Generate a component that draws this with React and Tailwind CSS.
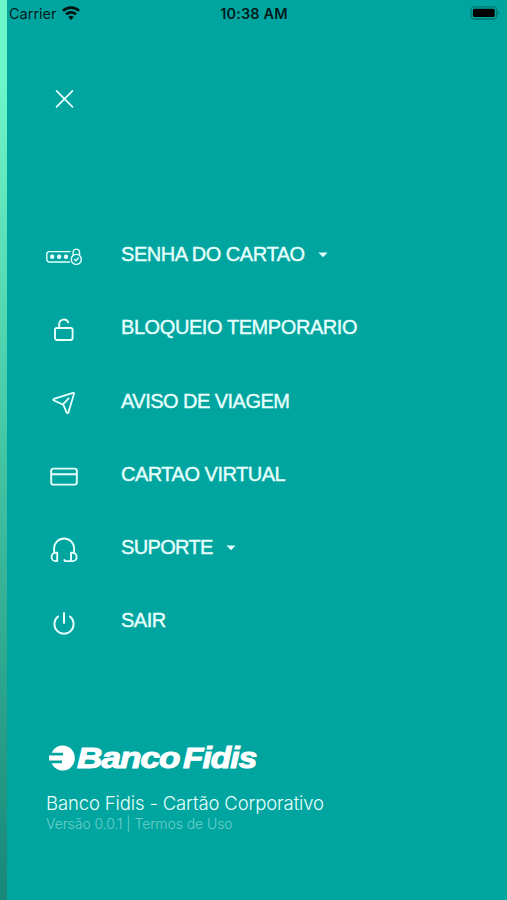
// src/pages/Menu.jsx
import { clsx } from "clsx";

function Icon({ className, children, ...props }) {
  return (
    <svg
      className={clsx("shrink-0 overflow-visible", className)}
      fill="none"
      stroke="currentColor"
      strokeLinecap="round"
      strokeLinejoin="round"
      strokeWidth="1.9"
      {...props}
    >
      {children}
    </svg>
  );
}

function PasswordIcon() {
  return (
    <Icon viewBox="0 0 36 18" className="h-[18px] w-9" strokeWidth="1.4">
      <path d="M24 3.6H3.4A2.6 2.6 0 0 0 .8 6.2v5.2A2.6 2.6 0 0 0 3.4 14H23.5" />
      <path d="M27.1 6.8V4.3a3.2 3.2 0 0 1 6.4 0v2.5" />
      <circle cx="30.3" cy="11.4" r="5" />
      <path d="m28.4 11.4 1.4 1.4 2.5-2.7" />
      <g fill="currentColor" stroke="none">
        <circle cx="6.2" cy="8.8" r="2.2" />
        <circle cx="13.1" cy="8.8" r="2.2" />
        <circle cx="20" cy="8.8" r="2.2" />
      </g>
    </Icon>
  );
}

function UnlockIcon() {
  return (
    <Icon viewBox="0 0 20 24" className="h-6 w-5">
      <rect x="1" y="10" width="17.6" height="12" rx="2" />
      <path d="M5.2 10V6.2a4.7 4.7 0 0 1 9-1.8" />
    </Icon>
  );
}

function PlaneIcon() {
  return (
    <Icon viewBox="0 0 24 24" className="mb-px size-6" strokeWidth="1.8">
      <path d="M1.9 7.8 21 1.8a.8.8 0 0 1 1 1l-5.6 18.7a.9.9 0 0 1-1.7.1l-3.1-7.2a2 2 0 0 0-1-1L1.9 9.5a.9.9 0 0 1 0-1.7Z" />
      <path d="m11 13.3 5.6-6" />
    </Icon>
  );
}

function CardIcon() {
  return (
    <Icon viewBox="0 0 28 20" className="h-5 w-7">
      <rect x="1.2" y="1.6" width="25.6" height="16" rx="2" />
      <path d="M1.2 7.2H27" />
    </Icon>
  );
}

function HeadsetIcon() {
  return (
    <Icon viewBox="0 0 28 26" className="h-[26px] w-7" strokeWidth="1.9">
      <path d="M4.1 15v-3.5a10 10 0 0 1 20 0V15" />
      <path d="M7.2 15.7v8.4H5.5c-2.1 0-3.9-1.7-3.9-4.2s1.8-4.2 3.9-4.2Z" />
      <path d="M21 15.7v8.4h1.7c2.1 0 3.9-1.7 3.9-4.2s-1.8-4.2-3.9-4.2Z" />
      <path d="M21 24.1h-5.8l-.9-1.2" />
    </Icon>
  );
}

function PowerIcon() {
  return (
    <Icon viewBox="0 0 24 24" className="size-6" strokeWidth="2">
      <path d="M12 1.9v10" />
      <path d="M6.1 5.5a9.6 9.6 0 1 0 11.8 0" />
    </Icon>
  );
}

const ITEMS = [
  { label: "SENHA DO CARTAO", icon: PasswordIcon, track: "tracking-[-0.45px]", more: true },
  { label: "BLOQUEIO TEMPORARIO", icon: UnlockIcon, track: "tracking-[-0.42px]" },
  { label: "AVISO DE VIAGEM", icon: PlaneIcon, track: "tracking-[-0.53px]" },
  { label: "CARTAO VIRTUAL", icon: CardIcon, track: "tracking-[-0.5px]" },
  { label: "SUPORTE", icon: HeadsetIcon, track: "tracking-[-0.65px]", more: true },
  { label: "SAIR", icon: PowerIcon, track: "tracking-[-0.5px]" },
];

function StatusBar() {
  return (
    <div className="grid h-7 grid-cols-3 items-center pl-[2px] pr-2 text-black/85">
      <div className="flex items-center gap-[5px]">
        <span className="font-[Inter] text-[14.5px] leading-7">Carrier</span>
        <svg viewBox="0 0 18 14" className="-mt-[3px] h-[14px] w-[18px]" fill="none" stroke="#001512" strokeWidth="2.7">
          <path d="M.9 4.9a11.6 11.6 0 0 1 16.2 0" />
          <path d="M4 8.4a7.2 7.2 0 0 1 10 0" />
          <path d="M9 14 6.3 11.1a3.8 3.8 0 0 1 5.4 0Z" fill="#001512" stroke="none" />
        </svg>
      </div>
      <div className="whitespace-nowrap text-center font-[Inter] text-[14.5px] font-semibold leading-7 tracking-[0.15px]">
        10:38 AM
      </div>
      <svg viewBox="0 0 30 14" className="-mt-[3px] h-[14px] w-[30px] justify-self-end">
        <rect x="2" y=".8" width="25.6" height="12.2" rx="3.4" fill="none" stroke="#00776f" strokeWidth="1.3" />
        <rect x="3.9" y="2.7" width="21.8" height="8.4" rx="1.6" fill="#000" />
        <path d="M28.8 5c1.5.6 1.5 3.4 0 4Z" fill="#00776f" />
      </svg>
    </div>
  );
}

export default function App() {
  return (
    <div className="flex h-[900px] w-[507px] overflow-hidden bg-[#00a5a0] font-['Liberation_Sans',Arial,sans-serif] text-[#e6fffc]">
      <div className="w-[7px] shrink-0 bg-linear-to-b from-[#6cf5c6] from-10% via-[#43c6a5] via-50% to-[#178779]" />

      <div className="flex flex-1 flex-col">
        <StatusBar />

        <button type="button" aria-label="Fechar" className="ml-[48px] mt-[61px] size-5">
          <Icon viewBox="0 0 20 20" className="size-5" strokeWidth="1.7">
            <path d="m1.5 1.8 16 16M17.5 1.8l-16 16" />
          </Icon>
        </button>

        <nav className="mt-[108.3px] flex flex-col">
          {ITEMS.map(({ label, icon: ItemIcon, track, more }) => (
            <div key={label} className="flex h-[73.3px] items-center pl-[39px]">
              <div className="flex w-9 justify-center pt-[6px]">
                <ItemIcon />
              </div>
              <span
                className={clsx(
                  "ml-[39px] whitespace-nowrap text-[20px] leading-6 [-webkit-text-stroke:0.4px_currentColor]",
                  track
                )}
              >
                {label}
              </span>
              {more && (
                <svg viewBox="0 0 10 6" className="ml-[13px] mt-[2px] h-[6px] w-[10px]" fill="currentColor">
                  <path d="M.4.5h9.2L5 5.3Z" />
                </svg>
              )}
            </div>
          ))}
        </nav>

        <footer className="ml-[39px] mt-[85.7px]">
          <div className="flex h-[30px] items-center gap-[3px] text-white">
            <svg viewBox="0 0 28 26" className="h-[26px] w-7 shrink-0 overflow-visible" fill="currentColor">
              <path d="M5.6 7.7A12.2 12.6 0 1 1 5.6 18.3H16V15.4H3V10.6H17V7.7Z" />
            </svg>
            <div className="flex whitespace-nowrap text-[30px] font-bold italic leading-[30px] tracking-[-0.8px] [-webkit-text-stroke:1.1px_currentColor]">
              <span className="w-[106px] origin-left scale-x-[1.17]">Banco</span>
              <span className="w-[74px] origin-left scale-x-[1.11]">Fidis</span>
            </div>
          </div>
          <p className="mt-[18px] whitespace-nowrap font-[Inter] text-[18.5px] font-light leading-6 tracking-[-0.13px]">
            Banco Fidis - Cartão Corporativo
          </p>
          <p className="whitespace-nowrap font-[Inter] text-[14px] font-light leading-[17px] tracking-[-0.08px] text-[#6dd0cb]">
            Versão 0.0.1 | Termos de Uso
          </p>
        </footer>
      </div>
    </div>
  );
}
